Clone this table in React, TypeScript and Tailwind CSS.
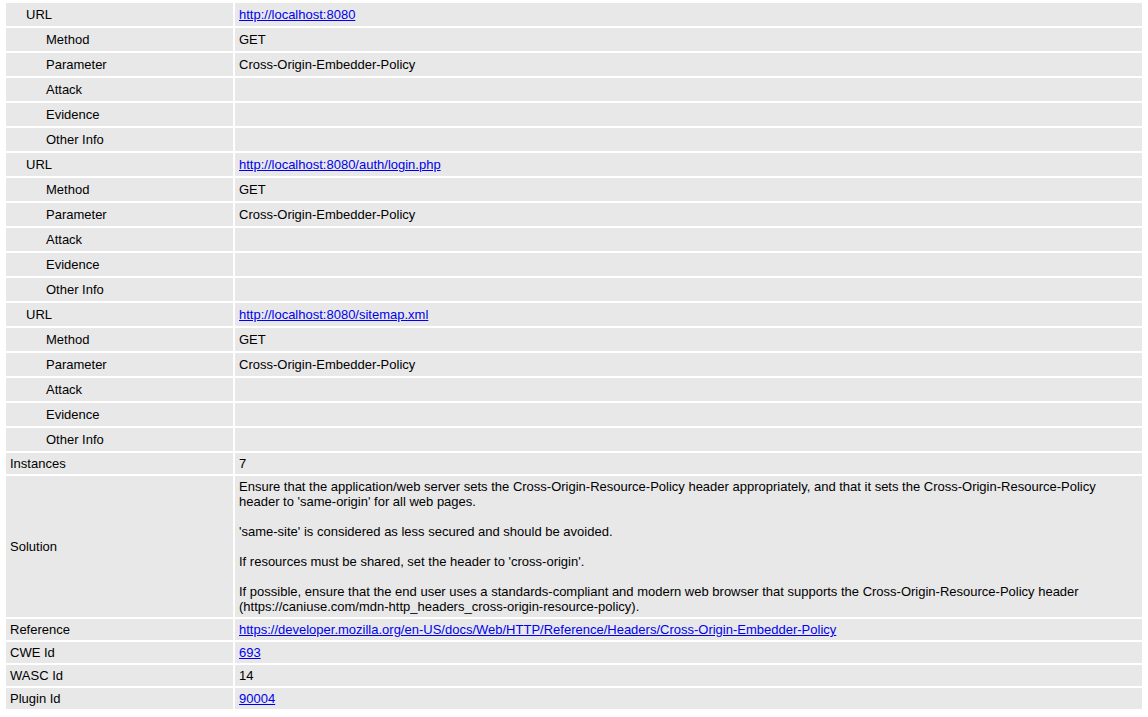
import React from "react";

type Instance = { url: string; method: string; parameter: string };

const instances: Instance[] = [
  { url: "http://localhost:8080", method: "GET", parameter: "Cross-Origin-Embedder-Policy" },
  { url: "http://localhost:8080/auth/login.php", method: "GET", parameter: "Cross-Origin-Embedder-Policy" },
  { url: "http://localhost:8080/sitemap.xml", method: "GET", parameter: "Cross-Origin-Embedder-Policy" },
];

const cell = "bg-[#e8e8e8] align-middle px-[4px] py-[3px]";
const sub = "bg-[#e8e8e8] align-middle px-[4px] py-[4px]";
const link = "text-[#0000ee] underline";

function SubRow({ label, indent, children }: { label: string; indent: 1 | 2; children?: React.ReactNode }) {
  return (
    <tr>
      <td className={`${sub} ${indent === 1 ? "pl-[20px]" : "pl-[40px]"}`}>{label}</td>
      <td className={sub}>{children}</td>
    </tr>
  );
}

function Row({ label, children }: { label: string; children?: React.ReactNode }) {
  return (
    <tr>
      <td className={cell}>{label}</td>
      <td className={cell}>{children}</td>
    </tr>
  );
}

export default function App() {
  return (
    <div className="bg-white min-h-[717px] pt-[1px] text-black text-[13px] leading-[15px] font-['Liberation_Sans',Arial,sans-serif]">
      <table className="ml-[4px] w-[1140px] table-fixed border-separate border-spacing-[2px]">
        <colgroup>
          <col className="w-[227px]" />
          <col />
        </colgroup>
        <tbody>
          {instances.map((inst) => (
            <React.Fragment key={inst.url}>
              <SubRow label="URL" indent={1}>
                <a href="#" className={link}>{inst.url}</a>
              </SubRow>
              <SubRow label="Method" indent={2}>{inst.method}</SubRow>
              <SubRow label="Parameter" indent={2}>{inst.parameter}</SubRow>
              <SubRow label="Attack" indent={2} />
              <SubRow label="Evidence" indent={2} />
              <SubRow label="Other Info" indent={2} />
            </React.Fragment>
          ))}
          <Row label="Instances">7</Row>
          <Row label="Solution">
            <p>
              Ensure that the application/web server sets the Cross-Origin-Resource-Policy header appropriately, and that it sets the Cross-Origin-Resource-Policy header to 'same-origin' for all web pages.
            </p>
            <br />
            <p>'same-site' is considered as less secured and should be avoided.</p>
            <br />
            <p>If resources must be shared, set the header to 'cross-origin'.</p>
            <br />
            <p>
              If possible, ensure that the end user uses a standards-compliant and modern web browser that supports the Cross-Origin-Resource-Policy header (https://caniuse.com/mdn-http_headers_cross-origin-resource-policy).
            </p>
          </Row>
          <Row label="Reference">
            <a href="#" className={link}>
              https://developer.mozilla.org/en-US/docs/Web/HTTP/Reference/Headers/Cross-Origin-Embedder-Policy
            </a>
          </Row>
          <Row label="CWE Id">
            <a href="#" className={link}>693</a>
          </Row>
          <Row label="WASC Id">14</Row>
          <Row label="Plugin Id">
            <a href="#" className={link}>90004</a>
          </Row>
        </tbody>
      </table>
    </div>
  );
}
